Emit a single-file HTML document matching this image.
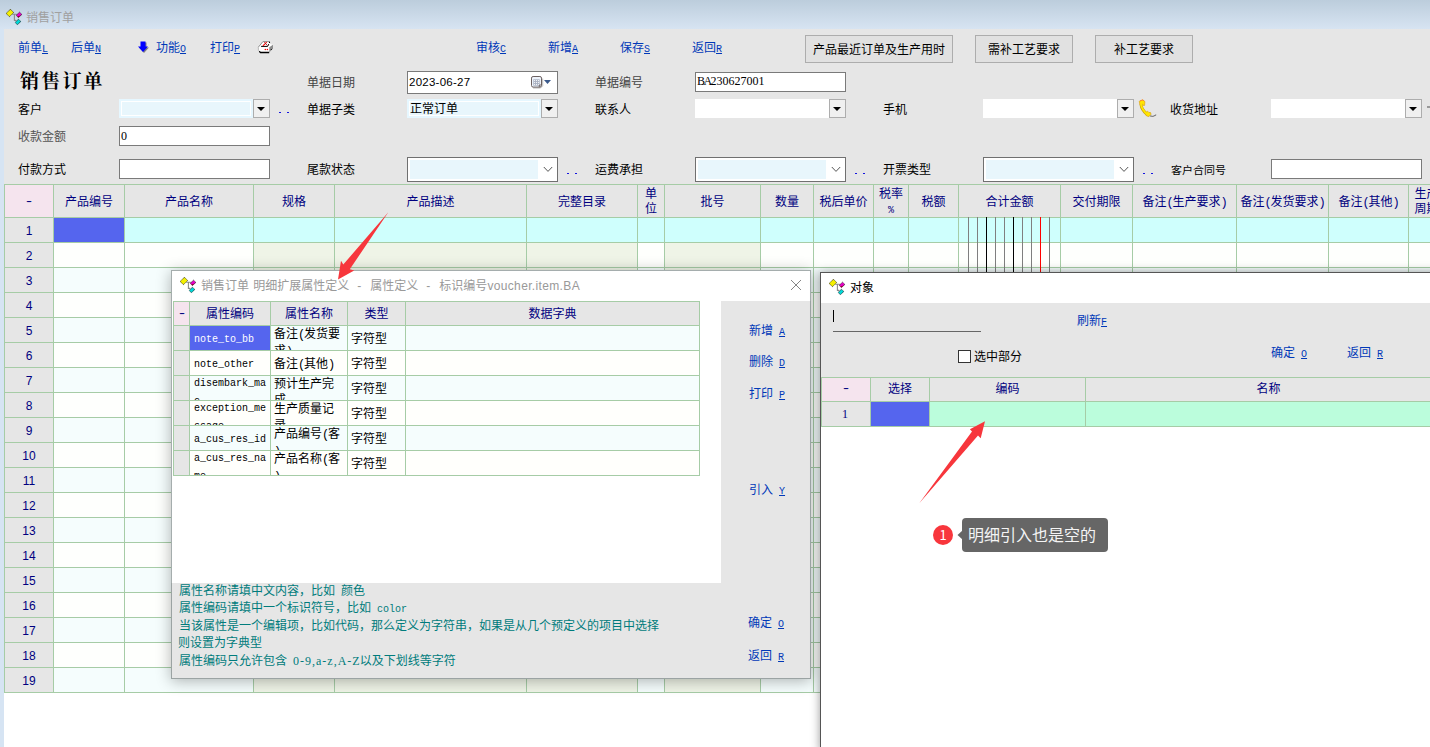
<!DOCTYPE html><html lang="zh-CN"><head><meta charset="utf-8"><title>销售订单</title><style>
html,body{margin:0;padding:0;}
body{width:1430px;height:747px;overflow:hidden;background:#fff;position:relative;
 font-family:"Liberation Sans","Noto Sans CJK SC",sans-serif;font-size:12px;line-height:14px;color:#000;}
.a{position:absolute;white-space:nowrap;}
.lk{color:#0038b8;}
.lk u,.lk2 u{font-family:"Liberation Mono",monospace;font-size:10px;}
.nv{color:#000080;}
.hd{color:#000080;text-align:center;}
.mono{font-family:"Liberation Mono","Noto Sans CJK SC",monospace;font-size:10px;}
.inp{position:absolute;box-sizing:border-box;border:1px solid #7a7a7a;background:#fff;}
.cb{position:absolute;background:#fff;}
.cb .f{position:absolute;left:0;top:0;right:17px;bottom:0;box-sizing:border-box;background:#e8f6fc;border:2px solid #e6f7ff;box-shadow:inset 0 0 0 1px #fff;}
.cb .b{position:absolute;right:0;top:0;width:17px;bottom:0;box-sizing:border-box;border:1px solid #adadad;background:#f0f0f0;}
.cb .b:after{content:"";position:absolute;left:3px;top:7px;border-left:4px solid transparent;border-right:4px solid transparent;border-top:4px solid #000;}
.cm{position:absolute;box-sizing:border-box;border:1px solid #707070;background:#fff;}
.cm .f{position:absolute;left:2px;top:2px;right:19px;bottom:2px;background:#e8f6fc;}
.btn{position:absolute;box-sizing:border-box;border:1px solid #adadad;background:#e1e1e1;text-align:center;line-height:28px;}
.dots{position:absolute;color:#0000ee;font-size:12px;letter-spacing:3px;font-weight:bold;}
.tl{color:#007c7c;word-spacing:2.7px;}
.ser{font-family:"Liberation Serif","Noto Sans CJK SC",serif;font-size:12px;}
.p{font-family:"Liberation Mono",monospace;font-size:12px;letter-spacing:-1.2px;}
</style></head><body>
<div class="a" style="left:0;top:0;width:1430px;height:29px;background:linear-gradient(#bccddc,#d7e4f2)"></div>
<div class="a" style="left:0;top:29px;width:4px;height:718px;background:#d6e4f3"></div>
<div class="a" style="left:4px;top:29px;width:1426px;height:155px;background:#e6e6e6"></div>
<svg class="a" style="left:6px;top:9px" width="17" height="17" viewBox="0 0 17 17">
<path d="M6.2 5.3 H10.7 M8.4 5.3 V11.4 H10.2" fill="none" stroke="#8a8a8a" stroke-width="1.1"/>
<path d="M4.4 0.3 L7.7 3.5 L3.4 7.7 L0.1 4.4 Z" fill="#f4f000" stroke="#111" stroke-width="0.8" stroke-dasharray="1 0.6"/>
<path d="M13.5 3.2 L15.9 5.4 L12.4 8.6 L10.2 6.3 Z" fill="#e800c8" stroke="#111" stroke-width="0.8" stroke-dasharray="1 0.6"/>
<path d="M14.7 6.5 L12.4 8.6 L11.2 7.4 Z" fill="#900020"/>
<path d="M12.4 10.3 L14.9 12.4 L11.4 15.7 L9.1 13.4 Z" fill="#00d8d8" stroke="#111" stroke-width="0.8" stroke-dasharray="1 0.6"/>
</svg>
<div class="a" style="left:26px;top:11px;color:#a0a0a0">销售订单</div>
<div class="a lk" style="left:18px;top:41px">前单<u>L</u></div>
<div class="a lk" style="left:71px;top:41px">后单<u>N</u></div>
<div class="a lk" style="left:156px;top:41px">功能<u>O</u></div>
<div class="a lk" style="left:210px;top:41px">打印<u>P</u></div>
<div class="a lk" style="left:476px;top:41px">审核<u>C</u></div>
<div class="a lk" style="left:548px;top:41px">新增<u>A</u></div>
<div class="a lk" style="left:620px;top:41px">保存<u>S</u></div>
<div class="a lk" style="left:692px;top:41px">返回<u>R</u></div>
<svg class="a" style="left:137px;top:41px" width="13" height="13" viewBox="0 0 13 13"><path d="M4.5 1.5 H9.5 V6.5 H12 L7 12 L2 6.5 H4.5 Z" fill="#808080"/><path d="M3.5 0.5 H8.5 V5.5 H11 L6 11 L1 5.5 H3.5 Z" fill="#0000ff"/></svg>
<svg class="a" style="left:257px;top:40px" width="17" height="14" viewBox="0 0 17 14">
<path d="M1.2 7.2 L5.9 1.5 H13 V4 L16 4.8 V8.6 L12.3 12.4 H2.6 L1.2 11 Z" fill="#fff"/>
<path d="M12.3 7.2 L16 4.8 V8.6 L12.3 12.4 Z" fill="#8c8c8c"/>
<path d="M1.3 7.2 L5.9 1.6 H13" stroke="#777" fill="none" stroke-width="0.8"/>
<path d="M1.4 7.2 V10.8" stroke="#aaa" stroke-width="0.8"/>
<path d="M4.1 6.4 H10.6 L11.8 4.1" stroke="#000" stroke-width="1" fill="none"/>
<circle cx="12.5" cy="2.4" r="0.6" fill="#000"/>
<path d="M2.2 11.3 L3.5 12.5 H12.2" stroke="#000" stroke-width="1.3" fill="none"/>
<path d="M5.9 5.8 L9.7 2.2" stroke="#f00" stroke-width="1.1"/>
<path d="M7.3 2.2 L10.4 5.5" stroke="#a02020" stroke-width="0.9"/>
<circle cx="8.3" cy="9.5" r="0.75" fill="#f00"/><circle cx="10.4" cy="9.5" r="0.75" fill="#f00"/>
<circle cx="14.3" cy="9.5" r="0.6" fill="#000"/>
</svg>
<div class="btn" style="left:805px;top:35px;width:148px;height:28px">产品最近订单及生产用时</div>
<div class="btn" style="left:975px;top:35px;width:98px;height:28px">需补工艺要求</div>
<div class="btn" style="left:1095px;top:35px;width:98px;height:28px">补工艺要求</div>
<div class="a" style="left:20px;top:69px;font-family:'Liberation Serif','Noto Serif CJK SC',serif;font-weight:700;font-size:19px;line-height:26px;letter-spacing:2.2px;color:#000">销售订单</div>
<div class="a" style="left:307px;top:76px;color:#444;">单据日期</div>
<div class="a" style="left:595px;top:76px;color:#444;">单据编号</div>
<div class="a" style="left:18px;top:103px;color:#000;">客户</div>
<div class="a" style="left:307px;top:103px;color:#000;">单据子类</div>
<div class="a" style="left:595px;top:103px;color:#000;">联系人</div>
<div class="a" style="left:883px;top:103px;color:#000;">手机</div>
<div class="a" style="left:1170px;top:103px;color:#000;">收货地址</div>
<div class="a" style="left:18px;top:130px;color:#555;">收款金额</div>
<div class="a" style="left:18px;top:163px;color:#000;">付款方式</div>
<div class="a" style="left:307px;top:163px;color:#000;">尾款状态</div>
<div class="a" style="left:595px;top:163px;color:#000;">运费承担</div>
<div class="a" style="left:883px;top:163px;color:#000;">开票类型</div>
<div class="a" style="left:1171px;top:163px;color:#000;font-size:11px;transform:scaleY(.92);letter-spacing:0px">客户合同号</div>
<div class="inp" style="left:407px;top:71px;width:151px;height:23px"><span class="a" style="left:1px;top:3px;font-size:11.5px;letter-spacing:.25px">2023-06-27</span></div>
<svg class="a" style="left:530px;top:75px" width="22" height="14" viewBox="0 0 22 14">
<path d="M3 13 H10.5 L12.7 10.8 V3.5" fill="none" stroke="#bbb" stroke-width="1"/>
<rect x="1.5" y="1.5" width="10" height="10.6" rx="1.6" fill="#eef3fb" stroke="#6b6060"/>
<rect x="3.3" y="4.3" width="6.4" height="6.4" fill="#a9b1c2"/>
<path d="M4.1 5.6 H5.1 M6.1 5.6 H7.1 M8.1 5.6 H9.1 M4.1 7.6 H5.1 M6.1 7.6 H7.1 M8.1 7.6 H9.1 M4.1 9.6 H5.1 M6.1 9.6 H7.1 M8.1 9.6 H9.1" stroke="#fff" stroke-width="1"/>
<path d="M9.3 12.2 V10 H11.6" fill="none" stroke="#6b6060" stroke-width="0.9"/>
<path d="M14 5 H21 L17.5 9 Z" fill="#3b5a8c"/></svg>
<div class="inp" style="left:695px;top:72px;width:151px;height:20px"><span class="a ser" style="left:1px;top:1px"><span style="letter-spacing:-1.6px">BA</span>230627001</span></div>
<div class="inp" style="left:119px;top:126px;width:151px;height:20px"><span class="a ser" style="left:1px;top:2px">0</span></div>
<div class="inp" style="left:119px;top:159px;width:151px;height:20px"></div>
<div class="inp" style="left:1271px;top:159px;width:151px;height:20px"></div>
<div class="cb" style="left:119px;top:99px;width:151px;height:19px"><div class="f"></div><div class="b"></div></div>
<div class="cb" style="left:407px;top:99px;width:151px;height:19px"><div class="f"></div><div class="b"></div><span class="a" style="left:3px;top:3px">正常订单</span></div>
<div class="cb" style="left:695px;top:99px;width:151px;height:19px"><div class="f" style="background:#fff;border-color:#fff"></div><div class="b"></div></div>
<div class="cb" style="left:983px;top:99px;width:151px;height:19px"><div class="f" style="background:#fff;border-color:#fff"></div><div class="b"></div></div>
<div class="cb" style="left:1271px;top:99px;width:151px;height:19px"><div class="f" style="background:#fff;border-color:#fff"></div><div class="b"></div></div>
<div class="cm" style="left:407px;top:157px;width:151px;height:25px"><div class="f"></div><svg class="a" style="right:4px;top:8px" width="10" height="7" viewBox="0 0 10 7"><path d="M0.8 1 L5 5.4 L9.2 1" fill="none" stroke="#555" stroke-width="1"/></svg></div>
<div class="cm" style="left:695px;top:157px;width:151px;height:25px"><div class="f"></div><svg class="a" style="right:4px;top:8px" width="10" height="7" viewBox="0 0 10 7"><path d="M0.8 1 L5 5.4 L9.2 1" fill="none" stroke="#555" stroke-width="1"/></svg></div>
<div class="cm" style="left:983px;top:157px;width:151px;height:25px"><div class="f"></div><svg class="a" style="right:4px;top:8px" width="10" height="7" viewBox="0 0 10 7"><path d="M0.8 1 L5 5.4 L9.2 1" fill="none" stroke="#555" stroke-width="1"/></svg></div>
<div class="a" style="left:279px;top:112px;width:2px;height:1px;background:#1515e0;box-shadow:8px 0 0 #1515e0"></div>
<div class="a" style="left:567px;top:173px;width:2px;height:1px;background:#1515e0;box-shadow:8px 0 0 #1515e0"></div>
<div class="a" style="left:855px;top:173px;width:2px;height:1px;background:#1515e0;box-shadow:8px 0 0 #1515e0"></div>
<div class="a" style="left:1143px;top:173px;width:2px;height:1px;background:#1515e0;box-shadow:8px 0 0 #1515e0"></div>
<div class="a" style="left:1427px;top:106px;width:3px;height:2px;background:#999"></div>
<svg class="a" style="left:1137px;top:99px" width="20" height="19" viewBox="0 0 20 19">
<path d="M12.8 16.9 Q16 18.2 18.8 16.2 V15.6" fill="none" stroke="#666" stroke-width="1"/>
<path d="M4.0 5.5 Q4.6 10.8 10.3 15.6" fill="none" stroke="#c8a010" stroke-width="3" stroke-linecap="round"/>
<path d="M2.2 2.3 L5.8 0.9 L7.9 2.6 L7.6 6.4 L6.3 6.6 L5.7 5.2 L3.0 5.8 Z" fill="#ffe600" stroke="#e0a020" stroke-width="0.7" stroke-linejoin="round"/>
<path d="M9.0 13.4 L10.6 12.2 L11.8 13.4 L13.6 13.6 L14 15.3 L11.8 17.6 L9.2 16.6 Z" fill="#ffe600" stroke="#d8a018" stroke-width="0.7" stroke-linejoin="round"/>
<path d="M4.1 5.5 Q4.7 10.6 10.4 15.5" fill="none" stroke="#ffe600" stroke-width="2" stroke-linecap="round"/>
<path d="M3 1.9 L5.8 0.9 L7.2 2" fill="none" stroke="#ff8030" stroke-width="0.9"/>
</svg>
<div class="a" style="left:4px;top:184px;width:1426px;height:509px;background:#fff;overflow:hidden">
<div class="a" style="left:0;top:0;width:1426px;height:33px;background:#e6e6e6"></div>
<div class="a" style="left:0;top:0;width:49px;height:33px;background:#f5e4ee"></div>
<div class="a" style="left:0;top:33px;width:1426px;height:25px;background:#cffffd"></div>
<div class="a" style="left:0;top:58px;width:1426px;height:25px;background:#fefffd"></div>
<div class="a" style="left:0;top:83px;width:1426px;height:25px;background:#f5fdfd"></div>
<div class="a" style="left:0;top:108px;width:1426px;height:25px;background:#fefffd"></div>
<div class="a" style="left:0;top:133px;width:1426px;height:25px;background:#f5fdfd"></div>
<div class="a" style="left:0;top:158px;width:1426px;height:25px;background:#fefffd"></div>
<div class="a" style="left:0;top:183px;width:1426px;height:25px;background:#f5fdfd"></div>
<div class="a" style="left:0;top:208px;width:1426px;height:25px;background:#fefffd"></div>
<div class="a" style="left:0;top:233px;width:1426px;height:25px;background:#f5fdfd"></div>
<div class="a" style="left:0;top:258px;width:1426px;height:25px;background:#fefffd"></div>
<div class="a" style="left:0;top:283px;width:1426px;height:25px;background:#f5fdfd"></div>
<div class="a" style="left:0;top:308px;width:1426px;height:25px;background:#fefffd"></div>
<div class="a" style="left:0;top:333px;width:1426px;height:25px;background:#f5fdfd"></div>
<div class="a" style="left:0;top:358px;width:1426px;height:25px;background:#fefffd"></div>
<div class="a" style="left:0;top:383px;width:1426px;height:25px;background:#f5fdfd"></div>
<div class="a" style="left:0;top:408px;width:1426px;height:25px;background:#fefffd"></div>
<div class="a" style="left:0;top:433px;width:1426px;height:25px;background:#f5fdfd"></div>
<div class="a" style="left:0;top:458px;width:1426px;height:25px;background:#fefffd"></div>
<div class="a" style="left:0;top:483px;width:1426px;height:25px;background:#f5fdfd"></div>
<div class="a" style="left:249px;top:58px;width:81px;height:450px;background:#eff4e7"></div>
<div class="a" style="left:330px;top:58px;width:192px;height:450px;background:#eff4e7"></div>
<div class="a" style="left:522px;top:58px;width:111px;height:450px;background:#eff4e7"></div>
<div class="a" style="left:660px;top:58px;width:96px;height:450px;background:#eff4e7"></div>
<div class="a" style="left:0;top:33px;width:49px;height:475px;background:#e6e6e6"></div>
<div class="a" style="left:49px;top:33px;width:71px;height:25px;background:#5565ee"></div>
<div class="a" style="left:0px;top:0;width:1px;height:509px;background:#a6cca6"></div>
<div class="a" style="left:49px;top:0;width:1px;height:509px;background:#a6cca6"></div>
<div class="a" style="left:120px;top:0;width:1px;height:509px;background:#a6cca6"></div>
<div class="a" style="left:249px;top:0;width:1px;height:509px;background:#a6cca6"></div>
<div class="a" style="left:330px;top:0;width:1px;height:509px;background:#a6cca6"></div>
<div class="a" style="left:522px;top:0;width:1px;height:509px;background:#a6cca6"></div>
<div class="a" style="left:633px;top:0;width:1px;height:509px;background:#a6cca6"></div>
<div class="a" style="left:660px;top:0;width:1px;height:509px;background:#a6cca6"></div>
<div class="a" style="left:756px;top:0;width:1px;height:509px;background:#a6cca6"></div>
<div class="a" style="left:809px;top:0;width:1px;height:509px;background:#a6cca6"></div>
<div class="a" style="left:869px;top:0;width:1px;height:509px;background:#a6cca6"></div>
<div class="a" style="left:904px;top:0;width:1px;height:509px;background:#a6cca6"></div>
<div class="a" style="left:954px;top:0;width:1px;height:509px;background:#a6cca6"></div>
<div class="a" style="left:1056px;top:0;width:1px;height:509px;background:#a6cca6"></div>
<div class="a" style="left:1128px;top:0;width:1px;height:509px;background:#a6cca6"></div>
<div class="a" style="left:1232px;top:0;width:1px;height:509px;background:#a6cca6"></div>
<div class="a" style="left:1324px;top:0;width:1px;height:509px;background:#a6cca6"></div>
<div class="a" style="left:1404px;top:0;width:1px;height:509px;background:#a6cca6"></div>
<div class="a" style="left:0;top:0px;width:1426px;height:1px;background:#a6cca6"></div>
<div class="a" style="left:0;top:33px;width:1426px;height:1px;background:#a6cca6"></div>
<div class="a" style="left:0;top:58px;width:1426px;height:1px;background:#a6cca6"></div>
<div class="a" style="left:0;top:83px;width:1426px;height:1px;background:#a6cca6"></div>
<div class="a" style="left:0;top:108px;width:1426px;height:1px;background:#a6cca6"></div>
<div class="a" style="left:0;top:133px;width:1426px;height:1px;background:#a6cca6"></div>
<div class="a" style="left:0;top:158px;width:1426px;height:1px;background:#a6cca6"></div>
<div class="a" style="left:0;top:183px;width:1426px;height:1px;background:#a6cca6"></div>
<div class="a" style="left:0;top:208px;width:1426px;height:1px;background:#a6cca6"></div>
<div class="a" style="left:0;top:233px;width:1426px;height:1px;background:#a6cca6"></div>
<div class="a" style="left:0;top:258px;width:1426px;height:1px;background:#a6cca6"></div>
<div class="a" style="left:0;top:283px;width:1426px;height:1px;background:#a6cca6"></div>
<div class="a" style="left:0;top:308px;width:1426px;height:1px;background:#a6cca6"></div>
<div class="a" style="left:0;top:333px;width:1426px;height:1px;background:#a6cca6"></div>
<div class="a" style="left:0;top:358px;width:1426px;height:1px;background:#a6cca6"></div>
<div class="a" style="left:0;top:383px;width:1426px;height:1px;background:#a6cca6"></div>
<div class="a" style="left:0;top:408px;width:1426px;height:1px;background:#a6cca6"></div>
<div class="a" style="left:0;top:433px;width:1426px;height:1px;background:#a6cca6"></div>
<div class="a" style="left:0;top:458px;width:1426px;height:1px;background:#a6cca6"></div>
<div class="a" style="left:0;top:483px;width:1426px;height:1px;background:#a6cca6"></div>
<div class="a" style="left:0;top:508px;width:1426px;height:1px;background:#a6cca6"></div>
<div class="a" style="left:964px;top:33px;width:1px;height:476px;background:#7f7f7f"></div>
<div class="a" style="left:973px;top:33px;width:1px;height:476px;background:#7f7f7f"></div>
<div class="a" style="left:982px;top:33px;width:1px;height:476px;background:#000"></div>
<div class="a" style="left:991px;top:33px;width:1px;height:476px;background:#7f7f7f"></div>
<div class="a" style="left:1000px;top:33px;width:1px;height:476px;background:#7f7f7f"></div>
<div class="a" style="left:1009px;top:33px;width:1px;height:476px;background:#000"></div>
<div class="a" style="left:1018px;top:33px;width:1px;height:476px;background:#7f7f7f"></div>
<div class="a" style="left:1027px;top:33px;width:1px;height:476px;background:#7f7f7f"></div>
<div class="a" style="left:1036px;top:33px;width:1px;height:476px;background:#f00"></div>
<div class="a" style="left:1045px;top:33px;width:1px;height:476px;background:#7f7f7f"></div>
<div class="a hd" style="left:1px;top:11px;width:48px;line-height:14px"><span style="display:inline-block;transform:scaleX(1.5);position:relative;top:-1px">-</span></div>
<div class="a hd" style="left:50px;top:11px;width:70px;line-height:14px">产品编号</div>
<div class="a hd" style="left:121px;top:11px;width:128px;line-height:14px">产品名称</div>
<div class="a hd" style="left:250px;top:11px;width:80px;line-height:14px">规格</div>
<div class="a hd" style="left:331px;top:11px;width:191px;line-height:14px">产品描述</div>
<div class="a hd" style="left:523px;top:11px;width:110px;line-height:14px">完整目录</div>
<div class="a hd" style="left:634px;top:3px;width:26px;line-height:15px">单<br>位</div>
<div class="a hd" style="left:661px;top:11px;width:95px;line-height:14px">批号</div>
<div class="a hd" style="left:757px;top:11px;width:52px;line-height:14px">数量</div>
<div class="a hd" style="left:810px;top:11px;width:59px;line-height:14px">税后单价</div>
<div class="a hd" style="left:870px;top:3px;width:34px;line-height:15px">税率<br><span class="mono">%</span></div>
<div class="a hd" style="left:905px;top:11px;width:49px;line-height:14px">税额</div>
<div class="a hd" style="left:955px;top:11px;width:101px;line-height:14px">合计金额</div>
<div class="a hd" style="left:1057px;top:11px;width:71px;line-height:14px">交付期限</div>
<div class="a hd" style="left:1129px;top:11px;width:103px;line-height:14px">备注<span class="p">(</span>生产要求<span class="p">)</span></div>
<div class="a hd" style="left:1233px;top:11px;width:91px;line-height:14px">备注<span class="p">(</span>发货要求<span class="p">)</span></div>
<div class="a hd" style="left:1325px;top:11px;width:79px;line-height:14px">备注<span class="p">(</span>其他<span class="p">)</span></div>
<div class="a hd" style="left:1405px;top:3px;width:35px;line-height:15px">生产<br>周期</div>
<div class="a hd" style="left:1px;top:40px;width:48px">1</div>
<div class="a hd" style="left:1px;top:65px;width:48px">2</div>
<div class="a hd" style="left:1px;top:90px;width:48px">3</div>
<div class="a hd" style="left:1px;top:115px;width:48px">4</div>
<div class="a hd" style="left:1px;top:140px;width:48px">5</div>
<div class="a hd" style="left:1px;top:165px;width:48px">6</div>
<div class="a hd" style="left:1px;top:190px;width:48px">7</div>
<div class="a hd" style="left:1px;top:215px;width:48px">8</div>
<div class="a hd" style="left:1px;top:240px;width:48px">9</div>
<div class="a hd" style="left:1px;top:265px;width:48px">10</div>
<div class="a hd" style="left:1px;top:290px;width:48px">11</div>
<div class="a hd" style="left:1px;top:315px;width:48px">12</div>
<div class="a hd" style="left:1px;top:340px;width:48px">13</div>
<div class="a hd" style="left:1px;top:365px;width:48px">14</div>
<div class="a hd" style="left:1px;top:390px;width:48px">15</div>
<div class="a hd" style="left:1px;top:415px;width:48px">16</div>
<div class="a hd" style="left:1px;top:440px;width:48px">17</div>
<div class="a hd" style="left:1px;top:465px;width:48px">18</div>
<div class="a hd" style="left:1px;top:490px;width:48px">19</div>
</div>
<div class="a" style="left:171px;top:270px;width:640px;height:409px;background:#fff;box-shadow:0 2px 14px rgba(0,0,0,.3);box-sizing:border-box">
<svg class="a" style="left:9px;top:7px" width="17" height="17" viewBox="0 0 17 17">
<path d="M6.2 5.3 H10.7 M8.4 5.3 V11.4 H10.2" fill="none" stroke="#8a8a8a" stroke-width="1.1"/>
<path d="M4.4 0.3 L7.7 3.5 L3.4 7.7 L0.1 4.4 Z" fill="#f4f000" stroke="#111" stroke-width="0.8" stroke-dasharray="1 0.6"/>
<path d="M13.5 3.2 L15.9 5.4 L12.4 8.6 L10.2 6.3 Z" fill="#e800c8" stroke="#111" stroke-width="0.8" stroke-dasharray="1 0.6"/>
<path d="M14.7 6.5 L12.4 8.6 L11.2 7.4 Z" fill="#900020"/>
<path d="M12.4 10.3 L14.9 12.4 L11.4 15.7 L9.1 13.4 Z" fill="#00d8d8" stroke="#111" stroke-width="0.8" stroke-dasharray="1 0.6"/>
</svg>
<div class="a" style="left:30px;top:9px;color:#999;word-spacing:1px">销售订单 明细扩展属性定义<span style="padding:0 9px 0 8px">-</span>属性定义<span style="padding:0 9px 0 8px">-</span>标识编号<span style="letter-spacing:.35px">voucher.item.BA</span></div>
<svg class="a" style="left:619px;top:9px" width="12" height="12" viewBox="0 0 12 12"><path d="M1 1 L11 11 M11 1 L1 11" stroke="#858585" stroke-width="1"/></svg>
<div class="a" style="left:550px;top:31px;width:90px;height:378px;background:#e6e6e6"></div>
<div class="a" style="left:0;top:313px;width:640px;height:96px;background:#e6e6e6"></div>
<div class="a" style="left:2px;top:31px;width:527px;height:175px;background:#fff">
<div class="a" style="left:0;top:0;width:527px;height:24px;background:#e6e6e6"></div>
<div class="a" style="left:0;top:0;width:16px;height:24px;background:#f5e4ee"></div>
<div class="a" style="left:0;top:24px;width:527px;height:25px;background:#f5fdfd"></div>
<div class="a" style="left:0;top:49px;width:527px;height:25px;background:#fffffc"></div>
<div class="a" style="left:0;top:74px;width:527px;height:25px;background:#f5fdfd"></div>
<div class="a" style="left:0;top:99px;width:527px;height:25px;background:#fffffc"></div>
<div class="a" style="left:0;top:124px;width:527px;height:25px;background:#f5fdfd"></div>
<div class="a" style="left:0;top:149px;width:527px;height:25px;background:#fffffc"></div>
<div class="a" style="left:0;top:24px;width:16px;height:150px;background:#e6e6e6"></div>
<div class="a" style="left:16px;top:24px;width:81px;height:25px;background:#5565ee"></div>
<div class="a" style="left:0px;top:0;width:1px;height:175px;background:#a6cca6"></div>
<div class="a" style="left:16px;top:0;width:1px;height:175px;background:#a6cca6"></div>
<div class="a" style="left:97px;top:0;width:1px;height:175px;background:#a6cca6"></div>
<div class="a" style="left:174px;top:0;width:1px;height:175px;background:#a6cca6"></div>
<div class="a" style="left:232px;top:0;width:1px;height:175px;background:#a6cca6"></div>
<div class="a" style="left:526px;top:0;width:1px;height:175px;background:#a6cca6"></div>
<div class="a" style="left:0;top:0px;width:527px;height:1px;background:#a6cca6"></div>
<div class="a" style="left:0;top:24px;width:527px;height:1px;background:#a6cca6"></div>
<div class="a" style="left:0;top:49px;width:527px;height:1px;background:#a6cca6"></div>
<div class="a" style="left:0;top:74px;width:527px;height:1px;background:#a6cca6"></div>
<div class="a" style="left:0;top:99px;width:527px;height:1px;background:#a6cca6"></div>
<div class="a" style="left:0;top:124px;width:527px;height:1px;background:#a6cca6"></div>
<div class="a" style="left:0;top:149px;width:527px;height:1px;background:#a6cca6"></div>
<div class="a" style="left:0;top:174px;width:527px;height:1px;background:#a6cca6"></div>
<div class="a hd" style="left:1px;top:6px;width:15px"><span style="display:inline-block;transform:scaleX(1.5);position:relative;top:-1px">-</span></div>
<div class="a hd" style="left:17px;top:6px;width:80px">属性编码</div>
<div class="a hd" style="left:98px;top:6px;width:76px">属性名称</div>
<div class="a hd" style="left:175px;top:6px;width:57px">类型</div>
<div class="a hd" style="left:233px;top:6px;width:293px">数据字典</div>
<div class="a mono" style="left:17px;top:25px;width:80px;height:24px;overflow:hidden;white-space:normal;line-height:16px;color:#fff"><div style="padding:5.5px 0 0 4px">note_to_bb</div></div>
<div class="a" style="left:98px;top:25px;width:76px;height:24px;overflow:hidden;line-height:16px"><div style="padding:0px 0 0 3px">备注<span class="p">(</span>发货要<br>求<span class="p">)</span></div></div>
<div class="a" style="left:178px;top:31px">字符型</div>
<div class="a mono" style="left:17px;top:50px;width:80px;height:24px;overflow:hidden;white-space:normal;line-height:16px;color:#000"><div style="padding:5.5px 0 0 4px">note_other</div></div>
<div class="a" style="left:98px;top:50px;width:76px;height:24px;overflow:hidden;line-height:16px"><div style="padding:5px 0 0 3px">备注<span class="p">(</span>其他<span class="p">)</span></div></div>
<div class="a" style="left:178px;top:56px">字符型</div>
<div class="a mono" style="left:17px;top:75px;width:80px;height:24px;overflow:hidden;white-space:normal;line-height:17.5px;color:#000"><div style="padding:0px 0 0 4px"><div style="margin-top:-1px">disembark_ma<br>c</div></div></div>
<div class="a" style="left:98px;top:75px;width:76px;height:24px;overflow:hidden;line-height:16px"><div style="padding:0px 0 0 3px">预计生产完<br>成</div></div>
<div class="a" style="left:178px;top:81px">字符型</div>
<div class="a mono" style="left:17px;top:100px;width:80px;height:24px;overflow:hidden;white-space:normal;line-height:17.5px;color:#000"><div style="padding:0px 0 0 4px"><div style="margin-top:-1px">exception_me<br>ssage</div></div></div>
<div class="a" style="left:98px;top:100px;width:76px;height:24px;overflow:hidden;line-height:16px"><div style="padding:0px 0 0 3px">生产质量记<br>录</div></div>
<div class="a" style="left:178px;top:106px">字符型</div>
<div class="a mono" style="left:17px;top:125px;width:80px;height:24px;overflow:hidden;white-space:normal;line-height:16px;color:#000"><div style="padding:5.5px 0 0 4px">a_cus_res_id</div></div>
<div class="a" style="left:98px;top:125px;width:76px;height:24px;overflow:hidden;line-height:16px"><div style="padding:0px 0 0 3px">产品编号<span class="p">(</span>客<br><span class="p">)</span></div></div>
<div class="a" style="left:178px;top:131px">字符型</div>
<div class="a mono" style="left:17px;top:150px;width:80px;height:24px;overflow:hidden;white-space:normal;line-height:17.5px;color:#000"><div style="padding:0px 0 0 4px"><div style="margin-top:-1px">a_cus_res_na<br>me</div></div></div>
<div class="a" style="left:98px;top:150px;width:76px;height:24px;overflow:hidden;line-height:16px"><div style="padding:0px 0 0 3px">产品名称<span class="p">(</span>客<br><span class="p">)</span></div></div>
<div class="a" style="left:178px;top:156px">字符型</div>
</div>
<div class="a lk" style="left:578px;top:54px;word-spacing:2.7px">新增 <u>A</u></div>
<div class="a lk" style="left:578px;top:85px;word-spacing:2.7px">删除 <u>D</u></div>
<div class="a lk" style="left:578px;top:117px;word-spacing:2.7px">打印 <u>P</u></div>
<div class="a lk" style="left:578px;top:213px;word-spacing:2.7px">引入 <u>Y</u></div>
<div class="a lk" style="left:577px;top:346px;word-spacing:2.7px">确定 <u>O</u></div>
<div class="a lk" style="left:577px;top:379px;word-spacing:2.7px">返回 <u>R</u></div>
<div class="a tl" style="left:8px;top:314px">属性名称请填中文内容，比如 颜色</div>
<div class="a tl" style="left:8px;top:331px">属性编码请填中一个标识符号，比如 <span class="mono">color</span></div>
<div class="a tl" style="left:8px;top:349px">当该属性是一个编辑项，比如代码，那么定义为字符串，如果是从几个预定义的项目中选择</div>
<div class="a tl" style="left:7px;top:366px">则设置为字典型</div>
<div class="a tl" style="left:8px;top:384px">属性编码只允许包含 <span class="ser" style="letter-spacing:1px">0-9,a-z,A-</span><span class="ser">Z</span>以及下划线等字符</div>
<div class="a" style="left:0;top:0;width:640px;height:409px;box-sizing:border-box;border:1px solid rgba(105,118,118,.6)"></div>
</div>
<svg class="a" style="left:0;top:0;pointer-events:none" width="1430" height="747" viewBox="0 0 1430 747"><path d="M388.3 212.3 L343.3 264.5 L341 260.8 L338 279.6 L354.2 270.6 L349.8 269.3 Z" fill="#f7363c"/></svg>
<div class="a" style="left:820px;top:272px;width:620px;height:480px;background:#fff;border:1px solid #555;box-shadow:0 0 9px rgba(0,0,0,.4);box-sizing:border-box">
<svg class="a" style="left:8px;top:6px" width="17" height="17" viewBox="0 0 17 17">
<path d="M6.2 5.3 H10.7 M8.4 5.3 V11.4 H10.2" fill="none" stroke="#8a8a8a" stroke-width="1.1"/>
<path d="M4.4 0.3 L7.7 3.5 L3.4 7.7 L0.1 4.4 Z" fill="#f4f000" stroke="#111" stroke-width="0.8" stroke-dasharray="1 0.6"/>
<path d="M13.5 3.2 L15.9 5.4 L12.4 8.6 L10.2 6.3 Z" fill="#e800c8" stroke="#111" stroke-width="0.8" stroke-dasharray="1 0.6"/>
<path d="M14.7 6.5 L12.4 8.6 L11.2 7.4 Z" fill="#900020"/>
<path d="M12.4 10.3 L14.9 12.4 L11.4 15.7 L9.1 13.4 Z" fill="#00d8d8" stroke="#111" stroke-width="0.8" stroke-dasharray="1 0.6"/>
</svg>
<div class="a" style="left:29px;top:8px">对象</div>
<div class="a" style="left:0;top:30px;width:620px;height:75px;background:#e6e6e6"></div>
<div class="a" style="left:12px;top:37px;width:1px;height:12px;background:#000"></div>
<div class="a" style="left:12px;top:58px;width:148px;height:1px;background:#666"></div>
<div class="a lk" style="left:256px;top:41px">刷新<u>F</u></div>
<div class="a" style="left:137px;top:77px;width:13px;height:13px;box-sizing:border-box;border:1px solid #333;background:#fff"></div>
<div class="a" style="left:153px;top:77px">选中部分</div>
<div class="a lk" style="left:450px;top:73px;word-spacing:2.7px">确定 <u>O</u></div>
<div class="a lk" style="left:526px;top:73px;word-spacing:2.7px">返回 <u>R</u></div>
<div class="a" style="left:0;top:104px;width:620px;height:50px;background:#bbfddc;overflow:hidden">
<div class="a" style="left:0;top:0;width:620px;height:24px;background:#e6e6e6"></div>
<div class="a" style="left:0;top:0;width:49px;height:24px;background:#f5e4ee"></div>
<div class="a" style="left:0;top:24px;width:49px;height:25px;background:#e6e6e6"></div>
<div class="a" style="left:49px;top:24px;width:59px;height:25px;background:#5565ee"></div>
<div class="a" style="left:0px;top:0;width:1px;height:49px;background:#a6cca6"></div>
<div class="a" style="left:49px;top:0;width:1px;height:49px;background:#a6cca6"></div>
<div class="a" style="left:108px;top:0;width:1px;height:49px;background:#a6cca6"></div>
<div class="a" style="left:264px;top:0;width:1px;height:49px;background:#a6cca6"></div>
<div class="a" style="left:0;top:0px;width:620px;height:1px;background:#a6cca6"></div>
<div class="a" style="left:0;top:24px;width:620px;height:1px;background:#a6cca6"></div>
<div class="a" style="left:0;top:49px;width:620px;height:1px;background:#a6cca6"></div>
<div class="a hd" style="left:1px;top:5px;width:48px"><span style="display:inline-block;transform:scaleX(1.5);position:relative;top:-1px">-</span></div>
<div class="a hd" style="left:50px;top:5px;width:58px">选择</div>
<div class="a hd" style="left:109px;top:5px;width:155px">编码</div>
<div class="a hd" style="left:265px;top:5px;width:365px">名称</div>
<div class="a hd" style="left:0;top:30px;width:48px;font-family:'Liberation Serif',serif">1</div>
</div>
</div>
<svg class="a" style="left:0;top:0;pointer-events:none" width="1430" height="747" viewBox="0 0 1430 747"><path d="M919.3 503.2 L972 431.6 L969.9 429.3 L985 421.3 L980.7 438.2 L978 435.6 Z" fill="#f7363c"/><circle cx="943" cy="535" r="10" fill="#f8363c"/><path d="M957.5 535 L962.5 530.5 V539.5 Z" fill="#666"/></svg>
<div class="a" style="left:933px;top:525px;width:20px;height:20px;line-height:20px;text-align:center;color:#fff;font-size:13px;font-family:'Noto Sans CJK SC',sans-serif">1</div>
<div class="a" style="left:962px;top:518px;width:146px;height:34px;border-radius:4px;background:#666;color:#f4f4f4;font-size:16px;line-height:36px;text-indent:6px">明细引入也是空的</div>
</body></html>
